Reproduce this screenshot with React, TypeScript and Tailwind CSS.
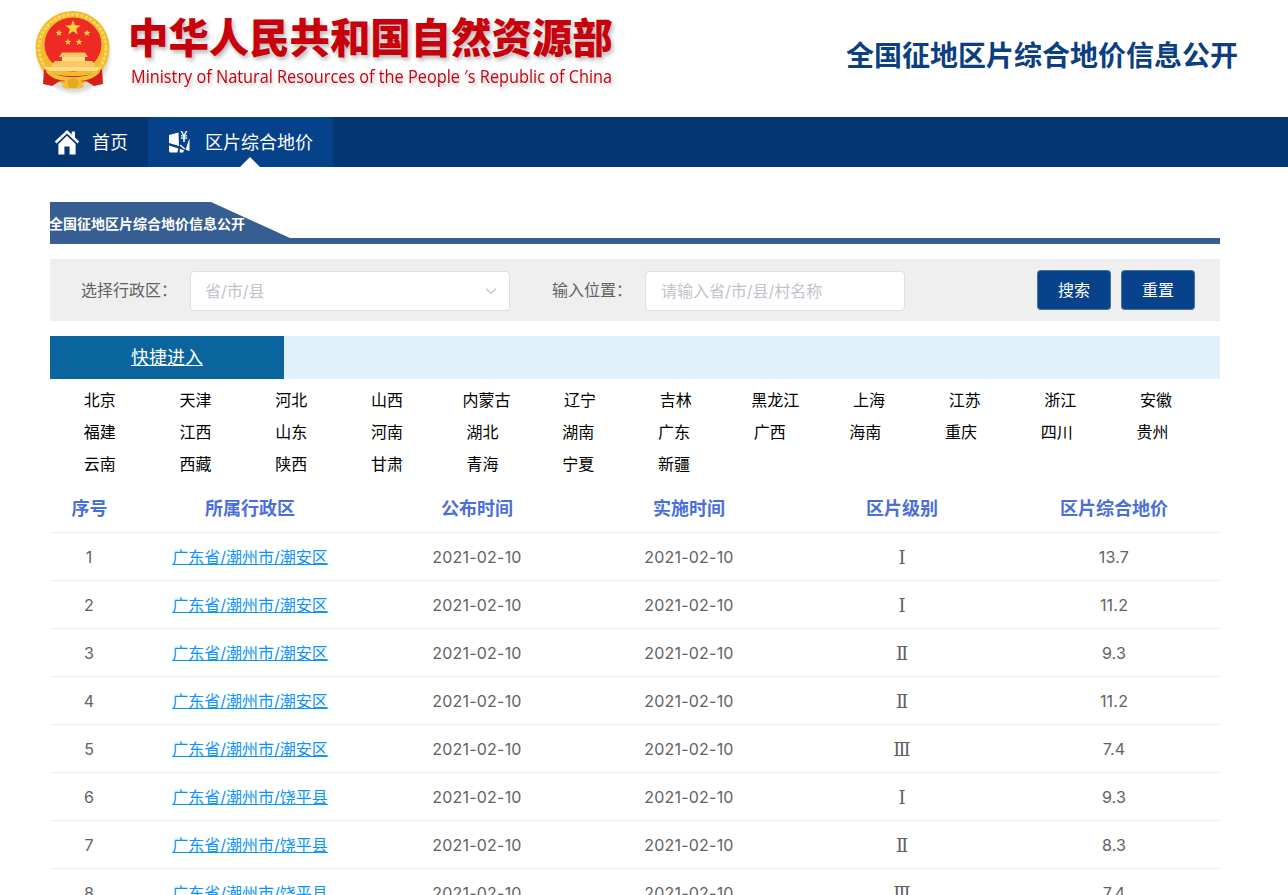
const CJK = `font-['Inter','Noto_Sans_CJK_SC',sans-serif]`;

function Star({ x, y, r }: { x: number; y: number; r: number }) {
  const pts: string[] = [];
  for (let i = 0; i < 10; i++) {
    const rad = i % 2 === 0 ? r : r * 0.42;
    const a = (-90 + i * 36) * (Math.PI / 180);
    pts.push(`${(x + rad * Math.cos(a)).toFixed(2)},${(y + rad * Math.sin(a)).toFixed(2)}`);
  }
  return <polygon points={pts.join(" ")} fill="#ffcf3f" />;
}

function Emblem() {
  return (
    <svg width="78" height="90" viewBox="0 0 78 90" className="shrink-0">
      <defs>
        <filter id="s" x="-20%" y="-20%" width="140%" height="140%">
          <feGaussianBlur stdDeviation="1.6" />
        </filter>
      </defs>
      <ellipse cx="40" cy="46" rx="36" ry="38" fill="#000" opacity="0.14" filter="url(#s)" />
      <ellipse cx="38.5" cy="39" rx="37" ry="37" fill="#f3bb2c" />
      <ellipse cx="38.5" cy="39" rx="33.5" ry="33.5" fill="none" stroke="#fbd768" strokeWidth="3" strokeDasharray="3 1.6" />
      <ellipse cx="39" cy="35.5" rx="28.5" ry="27" fill="#ee2a24" />
      <Star x={39} y={19} r={8} />
      <Star x={25} y={24} r={3.6} />
      <Star x={53} y={24} r={3.6} />
      <Star x={34} y={33} r={3.6} />
      <Star x={45} y={33} r={3.6} />
      <path d="M28 43.5h23l3 4.5H25Z" fill="#f9c862" />
      <rect x="28" y="48" width="23" height="4" fill="#fbdc8a" />
      <path d="M21 52h37l3 3v3H18v-3Z" fill="#f9c862" />
      <rect x="12" y="58" width="55" height="4" fill="#fbdc8a" />
      <path d="M10 60c8 6 16 7 29 7s21-1 29-7l1 15-9 2-8-5-13 2-13-2-8 5-9-2Z" fill="#d5201c" />
      <path d="M13 60c7 6 14 8 26 8s19-2 26-8l1 3c-5 6-12 8-19 9l3 6-6 2-5-2-5 2-6-2 3-6c-7-1-14-3-19-9Z" fill="#f3bf36" />
      <circle cx="39" cy="74" r="5.5" fill="#e9a91f" />
    </svg>
  );
}

function HomeIcon() {
  return (
    <svg width="26" height="26" viewBox="0 0 26 26" fill="#fff" className="shrink-0">
      <path d="M13 1 0.8 12.6l1.7 1.9L13 4.6l10.5 9.9 1.7-1.9L21 8.6V2.6h-3.2v3Z" />
      <path d="M13 6.8 4.4 14.9V25.4h6V17.6h5.2v7.8h6V14.9Z" />
    </svg>
  );
}

function ParcelIcon() {
  return (
    <svg width="21" height="22" viewBox="0 0 21 22" fill="#fff" className="shrink-0">
      <path d="M0 4 9.5 1.5 10 15 0 12Z" />
      <path d="M0 14.5 9.5 17.5 8.2 21.5H1L0 20Z" />
      <path d="M11 18 15 19.3 14 21.5H10.5Z" />
      <path d="M20.5 8V20L16.5 18.7 20.2 8Z" />
      <path d="M11.5 0h1.7l1.8 3.4L16.8 0h1.7l-2.4 4.2h2v1.2h-2.3v1.1h2.3v1.2h-2.3V11h-1.6V7.7h-2.3V6.5h2.3V5.4h-2.3V4.2h2Z" />
      <path d="M11 14 15.8 18" stroke="#fff" strokeWidth="1.4" />
    </svg>
  );
}

const row1 = ["北京","天津","河北","山西","内蒙古","辽宁","吉林","黑龙江","上海","江苏","浙江","安徽"];
const row2 = ["福建","江西","山东","河南","湖北","湖南","广东","广西","海南","重庆","四川","贵州"];
const row3 = ["云南","西藏","陕西","甘肃","青海","宁夏","新疆"];

const cols = "grid grid-cols-[78px_244px_210px_214px_212px_212px]";

const rows = [
  ["1","广东省/潮州市/潮安区","Ⅰ","13.7"],
  ["2","广东省/潮州市/潮安区","Ⅰ","11.2"],
  ["3","广东省/潮州市/潮安区","Ⅱ","9.3"],
  ["4","广东省/潮州市/潮安区","Ⅱ","11.2"],
  ["5","广东省/潮州市/潮安区","Ⅲ","7.4"],
  ["6","广东省/潮州市/饶平县","Ⅰ","9.3"],
  ["7","广东省/潮州市/饶平县","Ⅱ","8.3"],
  ["8","广东省/潮州市/饶平县","Ⅲ","7.4"],
];

function ProvinceRow({ items }: { items: string[] }) {
  return (
    <div className="flex h-8 items-center pl-[2px] text-base text-black">
      {items.map((p) =>
        p.length === 3 ? (
          <a key={p} className="w-[97.5px] shrink-0 pl-[6px] text-center">{p}</a>
        ) : (
          <a key={p} className="w-[95.7px] shrink-0 text-center">{p}</a>
        )
      )}
    </div>
  );
}

export default function App() {
  return (
    <div className={`h-[895px] overflow-hidden bg-white ${CJK}`}>
      <header className="flex h-[117px] items-start pl-[34px] pr-[50px]">
        <div className="mt-[9px]"><Emblem /></div>
        <div className="ml-[18px] mt-[15px] flex flex-col">
          <div className="-ml-[2px] h-[48px] whitespace-nowrap text-[40.4px] font-black leading-[48px] text-[#c8000b] [text-shadow:2px_3px_4px_rgba(0,0,0,0.28)]">
            中华人民共和国自然资源部
          </div>
          <div className="ml-[1px] mt-[2px] h-[22px] origin-left scale-x-[0.93] whitespace-nowrap font-['Open_Sans'] text-[17.5px] leading-[22px] text-[#c8000b] [text-shadow:2px_3px_4px_rgba(0,0,0,0.25)]">
            Ministry of Natural Resources of the People ′s Republic of China
          </div>
        </div>
        <h1 className="ml-auto mt-[38px] whitespace-nowrap text-[28px] font-bold leading-[36px] text-[#0b3f82]">
          全国征地区片综合地价信息公开
        </h1>
      </header>

      <nav className="flex h-[50px] bg-[#053674] text-lg text-white">
        <a className="flex w-[148px] items-center gap-[12px] pl-[54px]">
          <HomeIcon />
          <span className="pt-[2px]">首页</span>
        </a>
        <a className="relative flex w-[185px] items-center gap-[15px] bg-[#05428a] pl-[21px]">
          <ParcelIcon />
          <span className="pt-[2px]">区片综合地价</span>
          <span className="absolute bottom-0 left-[92px] h-[10px] w-[20px] bg-white [clip-path:polygon(50%_0,100%_100%,0_100%)]" />
        </a>
      </nav>

      <main className="mx-[50px] w-[1170px] pt-[35px]">
        <div className="flex h-[36px] w-[240px] items-center bg-[#365e92] pt-[6px] text-[14px] font-bold text-white [clip-path:polygon(0_0,161px_0,240px_100%,0_100%)]">
          <span className="-ml-px whitespace-nowrap">全国征地区片综合地价信息公开</span>
        </div>
        <div className="h-[6px] bg-[#365e92]" />

        <div className="mt-[15px] flex h-[62px] items-center bg-[#efefef] pl-[31px] pr-[25px] text-base text-[#606266]">
          <label className="w-[109px]">选择行政区：</label>
          <div className="mt-[2px] flex h-[40px] w-[320px] items-center justify-between rounded border border-[#dcdfe6] bg-white pl-[14px] pr-[11px] text-[#c0c4cc]">
            <span>省/市/县</span>
            <svg width="14" height="14" viewBox="0 0 14 14" fill="none" stroke="#c0c4cc" strokeWidth="1.1">
              <path d="M2 4.5l5 5 5-5" />
            </svg>
          </div>
          <label className="ml-[42px] w-[93px]">输入位置：</label>
          <div className="mt-[2px] flex h-[40px] w-[260px] items-center rounded border border-[#dcdfe6] bg-white pl-[15px] text-[#c0c4cc]">
            请输入省/市/县/村名称
          </div>
          <div className="ml-auto -mt-px flex gap-[10px]">
            <button className="h-[40px] w-[74px] rounded border border-[#dcdfe6]/30 bg-[#07428a] text-white">搜索</button>
            <button className="h-[40px] w-[74px] rounded border border-[#dcdfe6]/30 bg-[#07428a] text-white">重置</button>
          </div>
        </div>

        <div className="mt-[15px] flex h-[43px] bg-[#e0f1f9]">
          <a className="flex w-[234px] items-center justify-center bg-[#0a659f] text-lg text-white underline">快捷进入</a>
        </div>

        <div className="mt-[5px]">
          <ProvinceRow items={row1} />
          <ProvinceRow items={row2} />
          <ProvinceRow items={row3} />
        </div>

        <div className={`${cols} mt-[5px] h-[48px] items-center border-b border-[#ebeef5] pt-[1px] text-center text-lg font-bold text-[#4a6fd8]`}>
          <div className="pl-px">序号</div>
          <div>所属行政区</div>
          <div>公布时间</div>
          <div>实施时间</div>
          <div>区片级别</div>
          <div>区片综合地价</div>
        </div>

        {rows.map((r) => (
          <div key={r[0]} className={`${cols} h-[48px] items-center border-b border-[#ebeef5] text-center text-base text-[#606266]`}>
            <div>{r[0]}</div>
            <div><a className="text-[#0a94ff] underline">{r[1]}</a></div>
            <div className="tracking-[0.2px]">2021-02-10</div>
            <div className="tracking-[0.2px]">2021-02-10</div>
            <div className="pt-[2px] font-['DejaVu_Serif'] text-[18px] leading-6">{r[2]}</div>
            <div className="tracking-[0.2px]">{r[3]}</div>
          </div>
        ))}
      </main>
    </div>
  );
}
